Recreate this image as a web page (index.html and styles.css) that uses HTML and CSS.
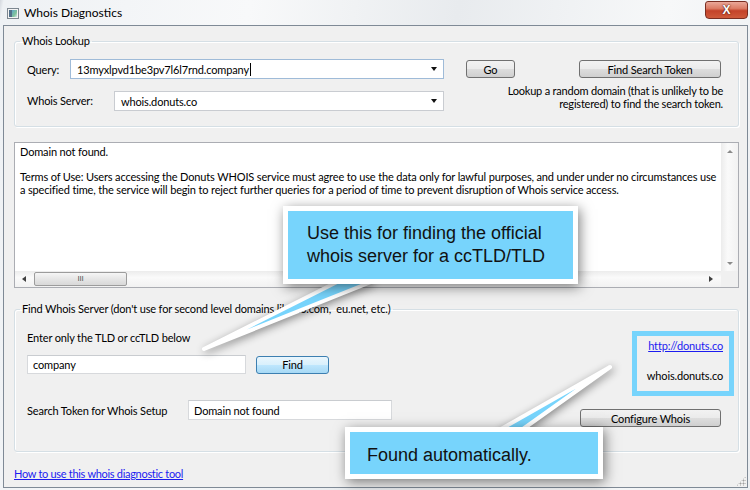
FILE: index.html
```html
<!DOCTYPE html>
<html lang="en">
<head>
  <meta charset="UTF-8">
  <meta name="viewport" content="width=device-width, initial-scale=1.0">
  <title>Whois Diagnostics</title>
  <link rel="stylesheet" href="styles.css">
</head>
<body>
  <div class="window">
    <div class="titlebar">
      <svg class="app-icon" width="12" height="11" viewBox="0 0 12 11">
        <defs>
          <linearGradient id="ico" x1="0" x2="1" y1="0" y2="1">
            <stop offset="0" stop-color="#5fa8c8"/>
            <stop offset="0.6" stop-color="#7fc29a"/>
            <stop offset="1" stop-color="#d8e8ef"/>
          </linearGradient>
        </defs>
        <rect x="0.5" y="0.5" width="11" height="10" fill="#f4f4f4" stroke="#7d8790"/>
        <rect x="2" y="2" width="3" height="7" fill="#52708a"/>
        <rect x="5" y="2" width="5" height="7" fill="url(#ico)"/>
      </svg>
      <span class="title">Whois Diagnostics</span>
      <div class="close-btn">X</div>
    </div>

    <div class="client">
      <fieldset class="group lookup">
        <legend>Whois Lookup</legend>
        <div class="lookup-row">
          <label class="lbl-query">Query:</label>
          <div class="combo combo-query focused">
            <span>13myxlpvd1be3pv7l6l7rnd.company</span><span class="caret"></span>
            <span class="drop"></span>
          </div>
          <button class="btn btn-go">Go</button>
          <button class="btn btn-token">Find Search Token</button>
        </div>
        <div class="lookup-row second">
          <label class="lbl-server">Whois Server:</label>
          <div class="combo combo-server">
            <span>whois.donuts.co</span>
            <span class="drop"></span>
          </div>
          <p class="note">Lookup a random domain (that is unlikely to be<br>registered) to find the search token.</p>
        </div>
      </fieldset>

      <div class="output">
        <div class="output-text">Domain not found.

Terms of Use: Users accessing the Donuts WHOIS service must agree to use the data only for lawful purposes, and under under no circumstances use
a specified time, the service will begin to reject further queries for a period of time to prevent disruption of Whois service access.</div>
        <div class="vscroll">
          <span class="arr arr-up"></span>
          <span class="arr arr-down"></span>
        </div>
        <div class="hscroll">
          <span class="arr-box"><span class="arr arr-left"></span></span>
          <span class="thumb">III</span>
          <span class="arr-box right"><span class="arr arr-right"></span></span>
        </div>
        <div class="corner"></div>
      </div>

      <fieldset class="group finder">
        <legend>Find Whois Server (don't use for second level domains like co.com,&nbsp; eu.net, etc.)</legend>
        <div class="finder-body">
          <div class="finder-left">
            <div class="hint">Enter only the TLD or ccTLD below</div>
            <div class="find-row">
              <div class="textbox tld">company</div>
              <button class="btn btn-find">Find</button>
            </div>
            <div class="token-row">
              <label class="lbl-token">Search Token for Whois Setup</label>
              <div class="textbox token">Domain not found</div>
            </div>
          </div>
          <div class="finder-right">
            <div class="found-box">
              <a class="link" href="#">http://donuts.co</a>
              <span class="found-server">whois.donuts.co</span>
            </div>
            <button class="btn btn-config">Configure Whois</button>
          </div>
        </div>
      </fieldset>

      <a class="link help-link" href="#">How to use this whois diagnostic tool</a>
      <div class="grip"></div>
    </div>

    <svg class="tails" width="750" height="490" viewBox="0 0 750 490">
      <polygon points="337,282 371,282 204,349" fill="#77d4fc" stroke="#ffffff" stroke-width="4" stroke-linejoin="round"/>
      <polygon points="501,429 523,429 610,367" fill="#77d4fc" stroke="#ffffff" stroke-width="4" stroke-linejoin="round"/>
    </svg>
    <div class="callout callout-top">Use this for finding the official<br>whois server for a ccTLD/TLD</div>
    <div class="callout callout-bottom">Found automatically.</div>
  </div>
</body>
</html>
```

FILE: styles.css
```css
body {
  margin: 0;
  width: 750px;
  height: 490px;
  overflow: hidden;
  font-family: Lato, "Liberation Sans", sans-serif;
  font-size: 11px;
  letter-spacing: -0.15px;
  color: #000000;
  background: #dfe3e8;
}

.window {
  position: relative;
  width: 750px;
  height: 490px;
  display: flex;
  flex-direction: column;
  background: linear-gradient(100deg, #d4d8de 0, #eef1f4 4px, #f8f9fa 30%, #e8ebee 55%, #f7f8f9 80%, #eceff2 100%);
}

/* title bar */
.titlebar {
  height: 25px;
  display: flex;
  align-items: center;
  padding: 0 2px 0 7px;
  box-sizing: border-box;
}

.app-icon {
  margin-top: 1px;
}

.title {
  margin-left: 5px;
  font-size: 12px;
  letter-spacing: 0;
  margin-top: -1px;
}

.close-btn {
  margin-left: auto;
  align-self: flex-start;
  width: 43px;
  height: 18px;
  margin-top: 1px;
  box-sizing: border-box;
  border: 1px solid #7a2e22;
  border-radius: 3px 3px 4px 4px;
  background: linear-gradient(#eaa899 0, #dc7d66 40%, #c4432a 55%, #cf5a3b 100%);
  color: #ffffff;
  font-family: "Liberation Sans", sans-serif;
  font-weight: bold;
  font-size: 12px;
  line-height: 16px;
  text-align: center;
  text-shadow: 0 0 2px #5a1a10, 0 0 1px #5a1a10;
}

/* client area */
.client {
  flex: 1;
  position: relative;
  margin: 0 2px 2px 3px;
  border: 1px solid #7f8a96;
  background: #f0f0f0;
  padding: 8px 8px 0 10px;
  display: flex;
  flex-direction: column;
}

.group {
  margin: 0;
  min-width: 0;
  border: 1px solid #d5dfe5;
  border-radius: 3px;
  box-shadow: inset 1px 1px 0 #ffffff, 1px 1px 0 #ffffff;
}

.group legend {
  padding: 0 2px;
  margin-left: -7px;
  line-height: 14px;
}

.lookup {
  padding: 11px 0 15px 12px;
}

.lookup-row {
  display: flex;
  align-items: center;
}

.lookup-row.second {
  margin-top: 12px;
  align-items: flex-start;
}

.lbl-query {
  width: 43px;
}

.lbl-server {
  width: 87px;
  line-height: 20px;
}

.combo {
  height: 20px;
  box-sizing: border-box;
  border: 1px solid #c9ccd1;
  background: #ffffff;
  display: flex;
  align-items: center;
  padding-left: 6px;
}

.combo.focused {
  border-color: #9fbbd8;
}

.combo-query {
  width: 374px;
}

.combo-server {
  width: 330px;
}

.caret {
  width: 1px;
  height: 13px;
  background: #000000;
  margin-left: 1px;
}

.drop {
  margin-left: auto;
  margin-right: 6px;
  border-left: 3.5px solid transparent;
  border-right: 3.5px solid transparent;
  border-top: 4px solid #111111;
}

.btn {
  height: 18px;
  box-sizing: border-box;
  padding: 0;
  border: 1px solid #707070;
  border-radius: 3px;
  background: linear-gradient(#f2f2f2 0, #ebebeb 48%, #dddddd 52%, #cfcfcf 100%);
  font-family: inherit;
  font-size: 11px;
  letter-spacing: inherit;
  color: #000000;
}

.btn-go {
  margin-left: 22px;
  width: 49px;
}

.btn-token {
  margin-left: 64px;
  width: 142px;
}

.note {
  flex: 1;
  margin: -7px 15px 0 0;
  text-align: right;
  line-height: 13px;
  letter-spacing: -0.2px;
}

/* output box */
.output {
  margin-top: 15px;
  height: 146px;
  box-sizing: border-box;
  border: 1px solid #abadb3;
  background: #ffffff;
  display: grid;
  grid-template-columns: 1fr 17px;
  grid-template-rows: 1fr 16px;
}

.output-text {
  padding: 3px 5px;
  white-space: pre;
  overflow: hidden;
  line-height: 12.5px;
}

.vscroll {
  display: flex;
  flex-direction: column;
  justify-content: space-between;
  align-items: center;
  padding: 7px 0 6px;
  background: linear-gradient(90deg, #ececec, #fafafa 40%, #f2f2f2);
}

.hscroll {
  display: flex;
  align-items: center;
  background: linear-gradient(#ececec, #fafafa 40%, #f2f2f2);
}

.corner {
  background: #f0f0f0;
}

.arr-box {
  width: 17px;
  display: flex;
  justify-content: center;
}

.arr-box.right {
  margin-left: auto;
  margin-right: 2px;
}

.arr {
  width: 0;
  height: 0;
}

.arr-up {
  border-left: 3px solid transparent;
  border-right: 3px solid transparent;
  border-bottom: 3px solid #8a8a8a;
}

.arr-down {
  border-left: 3px solid transparent;
  border-right: 3px solid transparent;
  border-top: 3px solid #8a8a8a;
}

.arr-left {
  border-top: 3px solid transparent;
  border-bottom: 3px solid transparent;
  border-right: 4px solid #404040;
}

.arr-right {
  border-top: 3px solid transparent;
  border-bottom: 3px solid transparent;
  border-left: 4px solid #404040;
}

.thumb {
  margin-left: 2px;
  width: 93px;
  height: 14px;
  box-sizing: border-box;
  border: 1px solid #9c9c9c;
  border-radius: 2px;
  background: linear-gradient(#f6f6f6, #e6e6e6 50%, #d8d8d8);
  font-family: "Liberation Sans", sans-serif;
  font-size: 8px;
  line-height: 12px;
  text-align: center;
  color: #555555;
}

/* finder group */
.finder {
  margin-top: 14px;
  padding: 7px 0 24px 12px;
}

.finder-body {
  display: flex;
  justify-content: space-between;
}

.hint {
  margin-top: 8px;
  line-height: 14px;
}

.find-row {
  margin-top: 10px;
  display: flex;
  align-items: center;
}

.textbox {
  box-sizing: border-box;
  border: 1px solid #d7d9dc;
  border-top-color: #c9ccd0;
  background: #ffffff;
  padding-left: 5px;
  display: flex;
  align-items: center;
}

.textbox.tld {
  width: 219px;
  height: 19px;
}

.btn-find {
  margin-left: 10px;
  width: 73px;
  border-color: #3c7fb1;
  background: linear-gradient(#eaf6fd 0, #d9f0fc 48%, #bee6fd 52%, #a7d9f5 100%);
}

.token-row {
  margin-top: 26px;
  display: flex;
  align-items: center;
}

.lbl-token {
  width: 161px;
}

.textbox.token {
  width: 204px;
  height: 20px;
}

.finder-right {
  display: flex;
  flex-direction: column;
  align-items: flex-end;
}

.found-box {
  margin-top: 8px;
  margin-right: 4px;
  width: 102px;
  height: 65px;
  box-sizing: border-box;
  border: 5px solid #77d4fc;
  padding: 3px 6px 0 0;
  display: flex;
  flex-direction: column;
  align-items: flex-end;
  line-height: 14px;
}

.found-server {
  margin-top: 16px;
}

.btn-config {
  margin-top: 13px;
  margin-right: 17px;
  width: 141px;
}

.link {
  color: #1c1cf0;
  text-decoration: underline;
}

.help-link {
  margin-top: 15px;
  align-self: flex-start;
  line-height: 14px;
  letter-spacing: -0.3px;
}

.grip {
  position: absolute;
  right: 1px;
  bottom: 1px;
  width: 10px;
  height: 10px;
  background: radial-gradient(circle, #a0a0a0 0.8px, transparent 1.2px) 0 0 / 3px 3px;
  clip-path: polygon(100% 0, 100% 100%, 0 100%);
}

/* annotation callouts */
.tails {
  position: absolute;
  left: 0;
  top: 0;
  pointer-events: none;
  filter: drop-shadow(2px 2px 4px rgba(0, 0, 0, 0.45));
}

.callout {
  position: absolute;
  box-sizing: border-box;
  border: 5px solid #ffffff;
  background: #77d4fc;
  box-shadow: 2px 3px 12px rgba(0, 0, 0, 0.5);
  font-family: "Liberation Sans", Arial, sans-serif;
  font-size: 18px;
  letter-spacing: 0;
  color: #111111;
}

.callout-top {
  left: 283px;
  top: 206px;
  width: 295px;
  height: 78px;
  padding: 11px 0 0 19px;
  line-height: 23px;
}

.callout-bottom {
  left: 345px;
  top: 427px;
  width: 258px;
  height: 52px;
  padding: 12px 0 0 17px;
  line-height: 22px;
}
```
